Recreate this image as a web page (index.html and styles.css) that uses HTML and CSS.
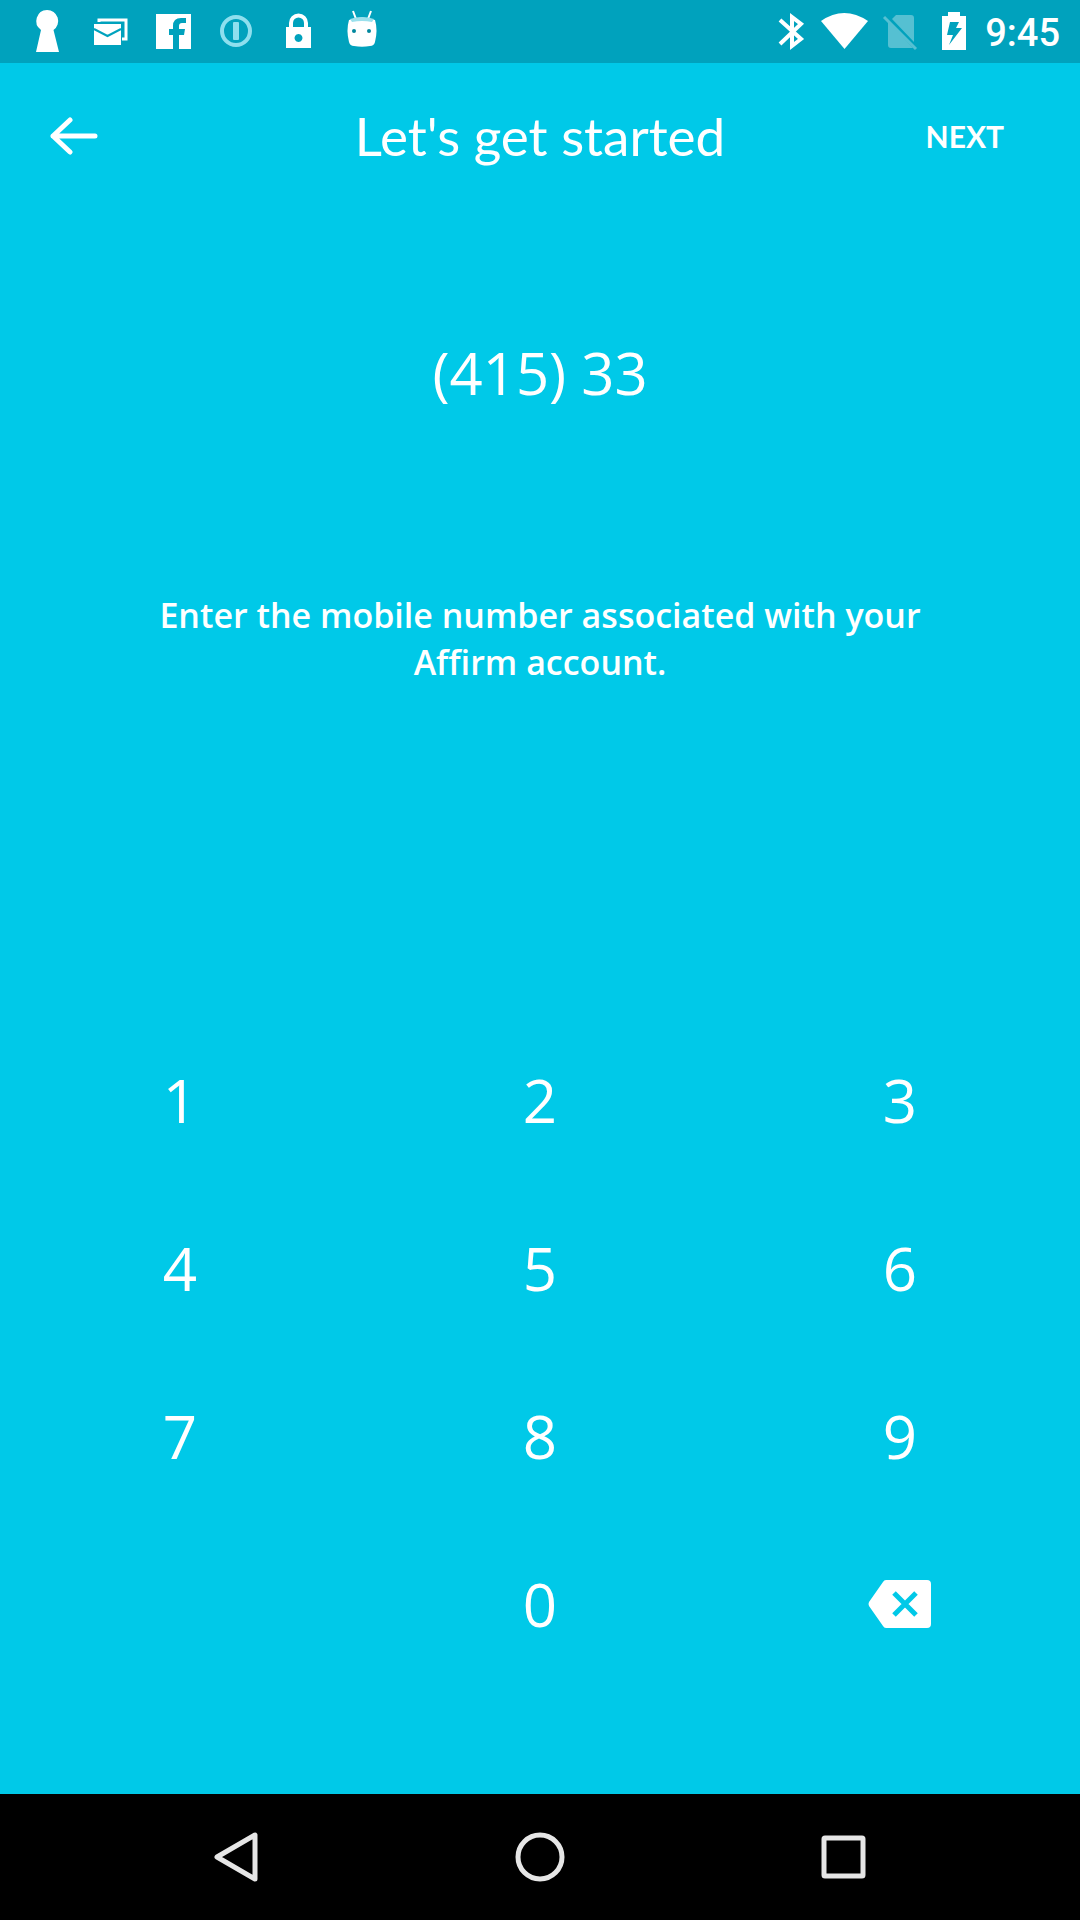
FILE: index.html
```html
<!DOCTYPE html>
<html lang="en">
<head>
<meta charset="utf-8">
<meta name="viewport" content="width=device-width, initial-scale=1">
<title>Let's get started</title>
<link rel="stylesheet" href="styles.css">
</head>
<body>
<div class="screen">
  <div class="status">
    <div class="status-group">
      <svg class="notice" viewBox="0 0 63 63" aria-hidden="true"><path fill="#fff" d="M31 10a11 11 0 0 1 6.500 20l5.500 22H20l5-22A11 11 0 0 1 31 10z"/></svg>
      <svg class="notice" viewBox="0 0 63 63" aria-hidden="true"><path fill="none" stroke="#fff" stroke-width="3" d="M20 22v-2h27v19h-4"/><path fill="#fff" d="M15 24h27v21H15z"/><path fill="none" stroke="#00a2bd" stroke-width="2" d="M15 29l13.500 7L42 29"/></svg>
      <svg class="notice" viewBox="0 0 63 63" aria-hidden="true"><path fill="#fff" d="M14 14h35v35H37V35h5l1-6h-6v-3q0-3 3-3h4v-5h-5q-8 0-8 8v3h-4v6h4v14H14z"/></svg>
      <svg class="notice" viewBox="0 0 63 63" aria-hidden="true"><circle cx="31" cy="31" r="14" fill="none" stroke="#8edfee" stroke-width="4"/><rect x="28" y="22" width="6" height="18" rx="1" fill="#8edfee"/></svg>
      <svg class="notice" viewBox="0 0 63 63" aria-hidden="true"><path fill="none" stroke="#fff" stroke-width="4" d="M23 28v-5a7.500 7.500 0 0 1 15 0v5"/><path fill="#fff" fill-rule="evenodd" d="M18 27h25v21H18zM30.500 34a4 4 0 1 0 .01 0z"/></svg>
      <svg class="notice" viewBox="0 0 63 63" aria-hidden="true"><path fill="none" stroke="#fff" stroke-width="2" d="M22 11l3 8M40 11l-3 8"/><path fill="#fff" d="M18 20q13-5 26 0 3 10 0 22-1 4-5 4-8 1.500-16 0-4 0-5-4-3-12 0-22z"/><path fill="#9ae0ec" d="M19 19q12-4 24 0l-2 3q-10-2-20 0z"/><circle cx="23" cy="31" r="2" fill="#00879e"/><circle cx="38" cy="31" r="2" fill="#00879e"/></svg>
    </div>
    <div class="status-group">
      <svg class="signal" viewBox="0 0 54 63" aria-hidden="true"><path fill="none" stroke="#fff" stroke-width="4" d="M17 20l21 19-9 7V17l9 7-21 20"/></svg>
      <svg class="signal" viewBox="0 0 54 63" aria-hidden="true"><path fill="#fff" d="M4 21q23-16 47 0L27.500 49z"/></svg>
      <svg class="signal" viewBox="0 0 54 63" aria-hidden="true"><path fill="#55c0d2" d="M25 15h15q3 0 3 3v24L21 19zM17 21l25 27H20q-3 0-3-3z"/><path stroke="#55c0d2" stroke-width="3" d="M13 17l32 32"/></svg>
      <svg class="signal" viewBox="0 0 54 63" aria-hidden="true"><path fill="#fff" fill-rule="evenodd" d="M23 12h12v4h6v34H17V16h6zM25 22l-3 13h6l-4 10 13-17h-6l3-6z"/></svg>
      <time class="clock">9:45</time>
    </div>
  </div>

  <header class="bar">
    <button class="back" type="button" aria-label="Back"><svg class="back-icon" viewBox="0 0 48 38" aria-hidden="true"><path d="M20 3L3 19l17 16M3 19h42"/></svg></button>
    <h1 class="title">Let's get started</h1>
    <button class="next" type="button">NEXT</button>
  </header>

  <main class="content">
    <input class="phone" id="phone" type="tel" value="(415) 33">
    <label class="message" for="phone">Enter the mobile number associated with your Affirm account.</label>
    <div class="keypad">
      <button class="key" type="button">1</button>
      <button class="key" type="button">2</button>
      <button class="key" type="button">3</button>
      <button class="key" type="button">4</button>
      <button class="key" type="button">5</button>
      <button class="key" type="button">6</button>
      <button class="key" type="button">7</button>
      <button class="key" type="button">8</button>
      <button class="key" type="button">9</button>
      <button class="key key-zero" type="button">0</button>
      <button class="key" type="button" aria-label="Delete"><svg class="delete-icon" viewBox="0 0 64 48" aria-hidden="true"><path fill="#fff" d="M18 0h41q4 0 4 4v40q0 4-4 4H18q-2 0-3-2L1 26q-1-2 0-4L15 2q1-2 3-2z"/><path stroke="#00c9e8" stroke-width="5" d="M26 13l22 22M48 13L26 35"/></svg></button>
    </div>
  </main>

  <nav class="system">
    <button class="system-key" type="button" aria-label="Back"><svg class="system-icon" viewBox="0 0 50 50"><path d="M42 3v44L4 25z"/></svg></button>
    <button class="system-key" type="button" aria-label="Home"><svg class="system-icon" viewBox="0 0 50 50"><circle cx="25" cy="25" r="22"/></svg></button>
    <button class="system-key" type="button" aria-label="Recent apps"><svg class="system-icon" viewBox="0 0 50 50"><rect x="7" y="6" width="39" height="38" rx="1"/></svg></button>
  </nav>
</div>
</body>
</html>
```
FILE: styles.css
```css
* {
  box-sizing: border-box;
}

body {
  margin: 0;
  background: #00c9e8;
  color: #fff;
  font-family: Lato, "Open Sans", sans-serif;
}

button,
input {
  margin: 0;
  padding: 0;
  border: 0;
  background: none;
  color: inherit;
  font-family: inherit;
}

svg {
  display: block;
}

.screen {
  display: flex;
  flex-direction: column;
  min-height: 100vh;
}

.status {
  display: flex;
  justify-content: space-between;
  padding: 0 20px 0 16px;
  background: #00a2bd;
}

.status-group {
  display: flex;
  align-items: center;
}

.notice {
  width: 63px;
  height: 63px;
}

.signal {
  width: 54px;
  height: 63px;
}

.clock {
  margin-left: 6px;
  padding-top: 3px;
  font: 500 38px/60px Roboto, sans-serif;
}

.bar {
  display: grid;
  grid-template-columns: 1fr auto 1fr;
  align-items: center;
  padding: 0 50px;
  height: 146px;
}

.back {
  justify-self: start;
}

.back-icon {
  width: 48px;
  height: 38px;
  fill: none;
  stroke: #fff;
  stroke-width: 5px;
  stroke-linecap: round;
  stroke-linejoin: round;
}

.title {
  margin: 0;
  font-size: 53px;
  font-weight: 400;
  line-height: 60px;
}

.next {
  justify-self: end;
  margin-right: 26px;
  font-size: 30px;
  font-weight: 700;
  line-height: 36px;
}

.content {
  flex: 1;
  display: flex;
  flex-direction: column;
  padding: 123px 0 106px;
}

.phone {
  width: 100%;
  height: 80px;
  font-family: "Open Sans", sans-serif;
  font-size: 58px;
  text-align: center;
}

.message {
  margin: 180px 150px 0;
  font-family: "Open Sans", sans-serif;
  font-size: 34px;
  font-weight: 600;
  line-height: 47px;
  text-align: center;
}

.keypad {
  display: grid;
  grid-template-columns: repeat(3, 1fr);
  grid-auto-rows: 168px;
  margin-top: auto;
}

.key {
  display: flex;
  align-items: center;
  justify-content: center;
  font-family: "Open Sans", sans-serif;
  font-size: 60px;
  line-height: 80px;
}

.key-zero {
  grid-column: 2;
}

.delete-icon {
  width: 64px;
  height: 48px;
}

.system {
  display: grid;
  grid-template-columns: repeat(3, 1fr);
  height: 126px;
  padding: 0 8%;
  background: #000;
}

.system-key {
  display: flex;
  align-items: center;
  justify-content: center;
}

.system-icon {
  width: 50px;
  height: 50px;
  fill: none;
  stroke: #e6e6e6;
  stroke-width: 5px;
  stroke-linejoin: round;
}
```
